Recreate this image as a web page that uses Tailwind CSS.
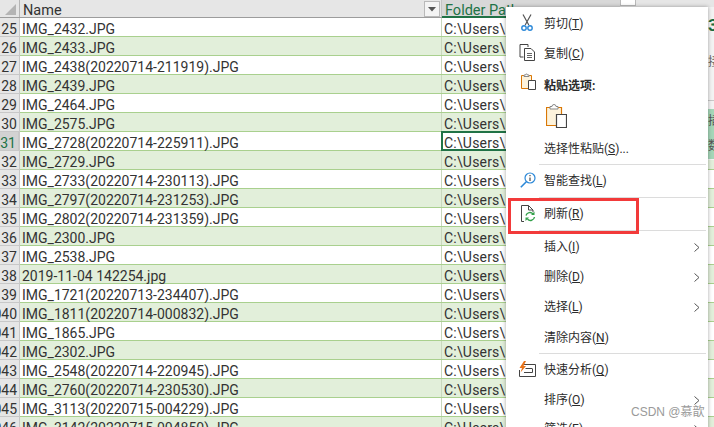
<!doctype html>
<html>

<head>
    <meta charset="UTF-8">
    <meta name="viewport" content="width=device-width, initial-scale=1.0">
    <script src="https://cdn.jsdelivr.net/npm/@tailwindcss/browser@4"></script>
</head>

<body class="bg-white">
    <div class="relative w-[714px] h-[427px] overflow-hidden bg-white font-['Roboto','Noto_Sans_CJK_SC',sans-serif] text-[#333]">

        <!-- Sheet header -->
        <div class="flex h-[18px] bg-[#e6e6e6] border-b border-[#9c9c9c] text-[14.5px] leading-[21px]">
            <div class="w-[20px] shrink-0 border-r border-[#b5b5b5] pt-[4px] pl-[5px]">
                <svg width="11" height="11" viewBox="0 0 11 11" class="block"><path d="M11 0V11H0Z" fill="#b4b4b4" /></svg>
            </div>
            <div class="w-[422px] shrink-0 flex border-r border-[#c4c4c4]">
                <span class="flex-1 pl-[3px] text-[#333]">Name</span>
                <div class="w-[16px] h-[16px] mt-[1px] mr-[1px] bg-[#f4f4f4] border border-[#b9b9b9] flex items-center justify-center">
                    <svg width="8" height="5" viewBox="0 0 8 5"><path d="M0 0H8L4 4.5Z" fill="#555" /></svg>
                </div>
            </div>
            <div class="w-[178px] shrink-0 h-[18px] bg-[#d8d8d8] border-b-2 border-[#217346] pl-[3px] text-[#217346]">Folder Path</div>
            <div class="w-[16px] h-[7px] bg-white border border-[#b9b9b9] -mt-[1px]"></div>
        </div>

        <!-- Sheet rows -->
        <div id="rows"></div>

        <!-- Ribbon side strip -->
        <div class="absolute right-0 top-0 w-[6px] h-[160px] bg-[#f3f3f3] overflow-hidden">
            <div class="h-[7px] bg-[#e6e6e6]"></div>
            <div class="h-[28px] pt-[8px] text-[17px] leading-[20px] font-bold text-[#1a6b3f]">3</div>
            <div class="h-[66px] pt-[20px] text-[12px] leading-[14px] text-[#666] border-b border-[#c8c8c8]">接</div>
            <div class="mt-[8px] h-[50px] bg-[#a5d6b8] text-[12px] leading-[25px] text-[#555]">
                <div>插</div>
                <div>数</div>
            </div>
        </div>

        <!-- Context menu -->
        <div class="absolute left-[506px] top-[7px] w-[202px] h-[440px] bg-white shadow-[0_0_4px_rgba(0,0,0,0.35)] text-[12px] leading-[16px] text-[#2b2b2b] pt-[2px]">
            <div class="flex items-center h-[30px]">
                <div class="w-[38px] pl-[13px] shrink-0">
                    <svg width="16" height="18" viewBox="0 0 16 18" class="block -translate-y-[1px]">
                        <path d="M4 0.5L9.8 11M12 0.5L6.2 11" stroke="#555" stroke-width="1.2" fill="none" />
                        <circle cx="5" cy="14" r="2.2" stroke="#2b88d8" stroke-width="1.4" fill="none" />
                        <circle cx="11" cy="14" r="2.2" stroke="#2b88d8" stroke-width="1.4" fill="none" />
                    </svg>
                </div>
                <span>剪切(<span class="underline">T</span>)</span>
            </div>
            <div class="flex items-center h-[30px]">
                <div class="w-[38px] pl-[13px] shrink-0">
                    <svg width="17" height="17" viewBox="0 0 17 17" class="block -translate-y-[2px]">
                        <path d="M5 0.5H1V13H4.5M5 0.5H9V3" stroke="#444" stroke-width="1" fill="none" />
                        <path d="M5.5 4.5H12L15.5 8V16.5H5.5Z" stroke="#444" stroke-width="1" fill="#fff" />
                        <path d="M8 9.5H13M8 11.5H13M8 13.5H13" stroke="#666" stroke-width="1" fill="none" />
                    </svg>
                </div>
                <span>复制(<span class="underline">C</span>)</span>
            </div>
            <div class="flex items-center h-[33px]">
                <div class="w-[38px] pl-[15px] shrink-0">
                    <svg width="15" height="17" viewBox="0 0 15 17" class="block -translate-y-[4px]">
                        <path d="M0.5 2.5H10.5V15.5H0.5Z" stroke="#d97706" stroke-width="1" fill="#fdf3dc" />
                        <path d="M3 3.5V2H4.5A1 1 0 0 1 6.5 2H8V3.5Z" stroke="#888" stroke-width="1" fill="#fff" />
                        <path d="M7.5 7.5H14.5V16.5H7.5Z" stroke="#444" stroke-width="1" fill="#fff" />
                    </svg>
                </div>
                <span class="font-bold">粘贴选项:</span>
            </div>
            <div class="flex h-[31px] pl-[40px]">
                <svg width="21" height="25" viewBox="0 0 21 25" class="block mt-[1px]">
                    <path d="M0.5 4.5H15.5V22.5H0.5Z" stroke="#d97706" stroke-width="1.2" fill="#fdf3dc" />
                    <path d="M4 6V3.5H6A2 2 0 0 1 10 3.5H12V6Z" stroke="#888" stroke-width="1" fill="#fff" />
                    <path d="M10.5 11.5H20.5V24.5H10.5Z" stroke="#444" stroke-width="1.2" fill="#fff" />
                </svg>
            </div>
            <div class="flex items-center h-[31px] pl-[38px]">
                <span>选择性粘贴(<span class="underline">S</span>)...</span>
            </div>
            <div class="ml-[33px] mr-[2px] h-px bg-[#dcdcdc]"></div>
            <div class="flex items-center h-[32px]">
                <div class="w-[38px] pl-[14px] shrink-0">
                    <svg width="16" height="16" viewBox="0 0 16 16" class="block -translate-y-[1px]">
                        <circle cx="10" cy="6" r="5" stroke="#2b88d8" stroke-width="1.2" fill="none" />
                        <path d="M6.3 9.7L0.8 15.2" stroke="#2b88d8" stroke-width="1.6" />
                        <path d="M10 5.5V9M10 3V4.2" stroke="#333" stroke-width="1.1" />
                    </svg>
                </div>
                <span>智能查找(<span class="underline">L</span>)</span>
            </div>
            <div class="ml-[33px] mr-[2px] h-px bg-[#dcdcdc]"></div>
            <div class="flex items-center h-[32px]">
                <div class="w-[38px] pl-[15px] shrink-0">
                    <svg width="15" height="17" viewBox="0 0 15 17" class="block -translate-y-[1px]">
                        <path d="M3 16.5H0.5V0.5H7.5L12 5V7M7.5 0.5V5H12" stroke="#444" stroke-width="1" fill="none" />
                        <path d="M5 10.5A4 4 0 0 1 12 9M13.5 12A4 4 0 0 1 6.5 14" stroke="#33a04a" stroke-width="1.4" fill="none" />
                        <path d="M13.5 6.5V10H10ZM4.5 16V12.5H8Z" fill="#33a04a" />
                    </svg>
                </div>
                <span>刷新(<span class="underline">R</span>)</span>
            </div>
            <div class="ml-[33px] mr-[2px] h-px bg-[#dcdcdc]"></div>
            <div class="flex items-center h-[32px] pl-[38px] pr-[8px]">
                <span class="flex-1">插入(<span class="underline">I</span>)</span>
                <svg width="6" height="9" viewBox="0 0 6 9"><path d="M0.5 0.5L5 4.5L0.5 8.5" stroke="#555" stroke-width="1" fill="none" /></svg>
            </div>
            <div class="flex items-center h-[28px] pl-[38px] pr-[8px]">
                <span class="flex-1">删除(<span class="underline">D</span>)</span>
                <svg width="6" height="9" viewBox="0 0 6 9"><path d="M0.5 0.5L5 4.5L0.5 8.5" stroke="#555" stroke-width="1" fill="none" /></svg>
            </div>
            <div class="flex items-center h-[32px] pl-[38px] pr-[8px]">
                <span class="flex-1">选择(<span class="underline">L</span>)</span>
                <svg width="6" height="9" viewBox="0 0 6 9"><path d="M0.5 0.5L5 4.5L0.5 8.5" stroke="#555" stroke-width="1" fill="none" /></svg>
            </div>
            <div class="flex items-center h-[30px] pl-[38px]">
                <span>清除内容(<span class="underline">N</span>)</span>
            </div>
            <div class="ml-[33px] mr-[2px] h-px bg-[#dcdcdc]"></div>
            <div class="flex items-center h-[32px]">
                <div class="w-[38px] pl-[13px] shrink-0">
                    <svg width="17" height="16" viewBox="0 0 17 16" class="block -translate-y-[1px]">
                        <path d="M4 3.5H16.5V15.5H0.5V9" stroke="#444" stroke-width="1" fill="none" />
                        <path d="M6.5 7.5H13.5M5 11.5H13.5V8" stroke="#444" stroke-width="1" fill="none" />
                        <path d="M5 0L0.5 7H3L1.5 11.5L7 5H4.5L7 0Z" fill="#e8731a" />
                    </svg>
                </div>
                <span>快速分析(<span class="underline">Q</span>)</span>
            </div>
            <div class="flex items-center h-[28px] pl-[38px] pr-[8px]">
                <span class="flex-1">排序(<span class="underline">O</span>)</span>
                <svg width="6" height="9" viewBox="0 0 6 9"><path d="M0.5 0.5L5 4.5L0.5 8.5" stroke="#555" stroke-width="1" fill="none" /></svg>
            </div>
            <div class="flex items-center h-[30px] pl-[38px] pr-[8px]">
                <span class="flex-1">筛选(<span class="underline">E</span>)</span>
                <svg width="6" height="9" viewBox="0 0 6 9"><path d="M0.5 0.5L5 4.5L0.5 8.5" stroke="#555" stroke-width="1" fill="none" /></svg>
            </div>
        </div>

        <!-- Red highlight round the refresh item -->
        <div class="absolute left-[508px] top-[198px] w-[131px] h-[36px] border-[3px] border-[#f23a3a]"></div>

        <!-- Watermark -->
        <div class="absolute left-[631px] top-[404px] text-[12px] leading-[16px] text-[#9a9a9a] font-['Liberation_Sans','Noto_Sans_CJK_SC',sans-serif]">CSDN @慕歆</div>
    </div>

    <script>
        const names = [
            "IMG_2432.JPG", "IMG_2433.JPG", "IMG_2438(20220714-211919).JPG", "IMG_2439.JPG",
            "IMG_2464.JPG", "IMG_2575.JPG", "IMG_2728(20220714-225911).JPG", "IMG_2729.JPG",
            "IMG_2733(20220714-230113).JPG", "IMG_2797(20220714-231253).JPG", "IMG_2802(20220714-231359).JPG",
            "IMG_2300.JPG", "IMG_2538.JPG", "2019-11-04 142254.jpg", "IMG_1721(20220713-234407).JPG",
            "IMG_1811(20220714-000832).JPG", "IMG_1865.JPG", "IMG_2302.JPG", "IMG_2548(20220714-220945).JPG",
            "IMG_2760(20220714-230530).JPG", "IMG_3113(20220715-004229).JPG", "IMG_3142(20220715-004850).JPG"
        ];

        // Row numbers go from 25 up, even rows carry the green band
        document.getElementById("rows").innerHTML = names.map((name, i) => {
            const num = 25 + i;
            const active = num === 31;
            const band = num % 2 === 0 ? "bg-[#e2efda]" : "bg-white";
            const numCell = active
                ? "bg-[#d2d2d2] text-[#217346] border-r-2 border-[#217346]"
                : "bg-[#e6e6e6] text-[#333] border-r border-[#b5b5b5]";
            const pathCell = active ? "outline-2 -outline-offset-1 outline-[#217346]" : "";
            const label = num >= 40 ? "0" + num : num;
            return `
            <div class="flex h-[19px] text-[14px] leading-[23px]">
                <div class="w-[20px] shrink-0 flex justify-end overflow-hidden pr-[2px] border-b border-[#c8c8c8] ${numCell}">${label}</div>
                <div class="flex flex-1 border-b border-[#a9d08e] ${band}">
                    <div class="w-[422px] shrink-0 pl-[2px] border-r border-[#c9d8bd] whitespace-nowrap">${name}</div>
                    <div class="flex-1 pl-[2px] tracking-[0.2px] whitespace-nowrap ${pathCell}">C:\\Users\\<span class="text-[#d9822b]">l</span>enovo</div>
                </div>
            </div>`;
        }).join("");
    </script>
</body>

</html>
